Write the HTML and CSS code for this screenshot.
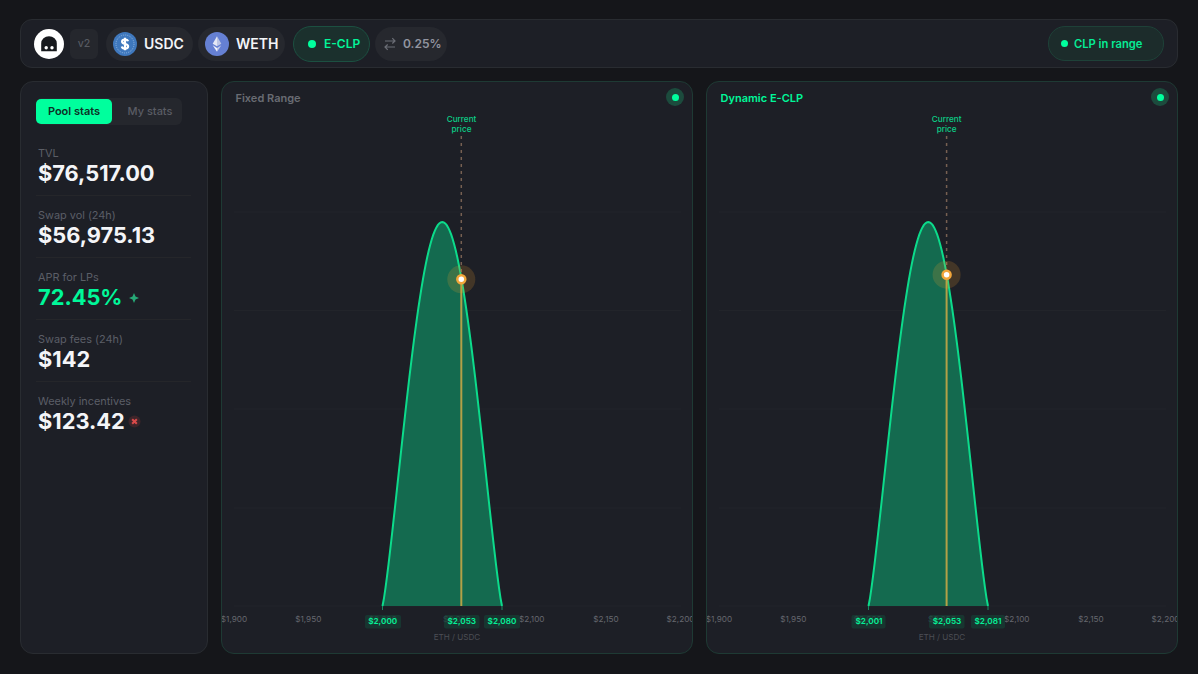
FILE: index.html
```html
<!DOCTYPE html>
<html lang="en">

<head>
    <meta charset="UTF-8">
    <meta name="viewport" content="width=device-width, initial-scale=1.0">
    <title>E-CLP Pool</title>
    <link rel="stylesheet" href="styles.css">
</head>

<body>

    <header class="topbar">
        <svg class="logo" viewBox="0 0 30 30">
            <circle cx="15" cy="15" r="15" fill="#fff" />
            <path d="M7.2 22.3V14.5a7.8 7.3 0 0 1 15.6 0v7.8z" fill="#17191d" />
            <circle cx="12.2" cy="18.7" r="1.7" fill="#fff" />
            <circle cx="18" cy="18.7" r="1.7" fill="#fff" />
        </svg>
        <span class="version">v2</span>

        <div class="pill token">
            <svg class="coin" viewBox="0 0 24 24">
                <circle cx="12" cy="12" r="12" fill="#3f78bd" />
                <circle cx="12" cy="12" r="9" fill="none" stroke="#8fb4de" stroke-width="1" stroke-dasharray="1 1" />
                <path d="M15 9.2c-.4-1.3-1.5-1.7-3-1.7-1.7 0-2.9.8-2.9 2.2 0 3 6 1.5 6 4.5 0 1.500-1.300 2.300-3.100 2.300-1.700 0-2.900-.7-3.200-2.100M12 5.700v12.600" fill="none" stroke="#fff" stroke-width="2.200" />
            </svg>
            <span>USDC</span>
        </div>
        <div class="pill token">
            <svg class="coin" viewBox="0 0 24 24">
                <circle cx="12" cy="12" r="12" fill="#6580d3" />
                <path d="M12 4.200 7.700 11.800 12 14.300z" fill="#e4e8f5" />
                <path d="M12 4.200 16.300 11.800 12 14.300z" fill="#bcc6e6" />
                <path d="M7.700 13.200 12 19.700v-3.800z" fill="#f2f4fb" />
                <path d="M16.300 13.200 12 19.700v-3.800z" fill="#c5cdea" />
            </svg>
            <span>WETH</span>
        </div>
        <div class="pill type"><span class="dot"></span>E-CLP</div>
        <div class="pill fee">
            <svg class="swap" viewBox="0 0 12 14">
                <path d="M1 4h10M8.300 1.200 11 4 8.300 6.500M11 10H1M3.700 7.500 1 10l2.700 2.800" fill="none" stroke="#6b6e76" stroke-width="1.200" />
            </svg>
            0.25%
        </div>
        <div class="pill status"><span class="dot"></span>CLP in range</div>
    </header>

    <main class="layout">
        <aside class="panel sidebar">
            <div class="tabs">
                <button class="tab active">Pool stats</button>
                <button class="tab">My stats</button>
            </div>

            <div class="stat">
                <div class="label">TVL</div>
                <div class="value">$76,517.00</div>
            </div>
            <div class="stat">
                <div class="label">Swap vol (24h)</div>
                <div class="value">$56,975.13</div>
            </div>
            <div class="stat">
                <div class="label">APR for LPs</div>
                <div class="value green">72.45%
                    <svg class="spark" viewBox="0 0 10 10">
                        <path d="M5 0 6.500 3.500 10 5 6.500 6.500 5 10 3.500 6.500 0 5 3.500 3.500z" fill="#27a876" />
                    </svg>
                </div>
            </div>
            <div class="stat">
                <div class="label">Swap fees (24h)</div>
                <div class="value">$142</div>
            </div>
            <div class="stat">
                <div class="label">Weekly incentives</div>
                <div class="value">$123.42
                    <svg class="reward" viewBox="0 0 14 14">
                        <circle cx="7" cy="7" r="6.500" fill="#3d252a" />
                        <path d="M4.500 4.500l5 5M9.500 4.500l-5 5" stroke="#d94a4a" stroke-width="2.200" />
                    </svg>
                </div>
            </div>
        </aside>

        <section class="panel chart">
            <div class="chart-head">
                <h2>Fixed Range</h2>
                <span class="halo"><span class="dot"></span></span>
            </div>
            <svg class="plot" viewBox="0 0 470 539">
                <path class="grid" d="M12 98H459M12 196.500H459M12 295H459M12 394H459M12 492H459" />
                <g class="ticks">
                    <text x="12" y="508.300">$1,900</text>
                    <text x="86.300" y="508.300">$1,950</text>
                    <text x="160.700" y="508.300">$2,000</text>
                    <text x="235" y="508.300">$2,050</text>
                    <text x="309.700" y="508.300">$2,100</text>
                    <text x="384" y="508.300">$2,150</text>
                    <text x="458.500" y="508.300">$2,200</text>
                </g>
                <text class="axis" x="235" y="526">ETH / USDC</text>
                <path class="curve" data-left="160.500" data-right="280" />
                <path class="edge" d="M160.500 492v4M280 492v4" />
                <text class="price" x="239.500" y="8">Current</text>
                <text class="price" x="239.500" y="17.500">price</text>
                <path class="dashed" d="M239.300 22V160" />
                <path class="stem" d="M239.300 165V492" />
                <circle class="glow" cx="239.300" cy="165.300" r="14" />
                <circle class="marker" cx="239.300" cy="165.300" r="4" />
                <g class="badges">
                    <rect x="143" y="501" width="36" height="13.500" rx="2" />
                    <rect x="222" y="501" width="35.500" height="13.500" rx="2" />
                    <rect x="262" y="501" width="36" height="13.500" rx="2" />
                    <text x="160.700" y="510.300">$2,000</text>
                    <text x="239.800" y="510.300">$2,053</text>
                    <text x="280" y="510.300">$2,080</text>
                </g>
            </svg>
        </section>

        <section class="panel chart">
            <div class="chart-head">
                <h2 class="green">Dynamic E-CLP</h2>
                <span class="halo"><span class="dot"></span></span>
            </div>
            <svg class="plot" viewBox="0 0 470 539">
                <path class="grid" d="M12 98H459M12 196.500H459M12 295H459M12 394H459M12 492H459" />
                <g class="ticks">
                    <text x="12" y="508.300">$1,900</text>
                    <text x="86.300" y="508.300">$1,950</text>
                    <text x="160.700" y="508.300">$2,000</text>
                    <text x="235" y="508.300">$2,050</text>
                    <text x="309.700" y="508.300">$2,100</text>
                    <text x="384" y="508.300">$2,150</text>
                    <text x="458.500" y="508.300">$2,200</text>
                </g>
                <text class="axis" x="235" y="526">ETH / USDC</text>
                <path class="curve" data-left="161.500" data-right="281" />
                <path class="edge" d="M161.500 492v4M281 492v4" />
                <text class="price" x="239.700" y="8">Current</text>
                <text class="price" x="239.700" y="17.500">price</text>
                <path class="dashed" d="M239.600 22V156" />
                <path class="stem" d="M239.600 161V492" />
                <circle class="glow" cx="239.600" cy="160.700" r="14" />
                <circle class="marker" cx="239.600" cy="160.700" r="4" />
                <g class="badges">
                    <rect x="144.500" y="501" width="34" height="13.500" rx="2" />
                    <rect x="222" y="501" width="35.500" height="13.500" rx="2" />
                    <rect x="264" y="501" width="34" height="13.500" rx="2" />
                    <text x="162" y="510.300">$2,001</text>
                    <text x="240" y="510.300">$2,053</text>
                    <text x="281" y="510.300">$2,081</text>
                </g>
            </svg>
        </section>
    </main>

    <script>
        // liquidity curve between the two price bounds
        document.querySelectorAll(".curve").forEach(function (path) {
            const left = parseFloat(path.dataset.left);
            const right = parseFloat(path.dataset.right);
            const base = 492, height = 384, steps = 80;
            let d = "";
            for (let i = 0; i <= steps; i++) {
                const t = i / steps;
                const x = left + (right - left) * t;
                const y = base - height * Math.pow(Math.max(0, Math.sin(Math.PI * t)), 1.2);
                d += (i ? "L" : "M") + x.toFixed(2) + " " + y.toFixed(2);
            }
            path.setAttribute("d", d);
        });
    </script>

</body>

</html>
```
FILE: styles.css
```css
* {
    margin: 0;
    padding: 0;
    box-sizing: border-box;
    font-family: 'Inter', sans-serif;
}

body {
    background-color: #15161a;
    color: #f4f5f8;
    height: 674px;
    padding: 19px 20px 20px;
    display: flex;
    flex-direction: column;
    gap: 13px;
    overflow: hidden;
}

.topbar {
    height: 49px;
    display: flex;
    align-items: center;
    padding: 0 13px;
    background: #1d1f26;
    border: 1px solid #292c31;
    border-radius: 12px;
}

.logo {
    width: 30px;
    height: 30px;
}

.version {
    width: 28px;
    height: 30px;
    margin: 0 8px 0 6px;
    border-radius: 6px;
    background: #25272d;
    color: #575a61;
    font-size: 10.5px;
    font-weight: 500;
    line-height: 29px;
    text-align: center;
}

.pill {
    height: 34px;
    display: flex;
    align-items: center;
    border-radius: 17px;
    background: #26282e;
    font-weight: 600;
}

.token {
    width: 87px;
    padding-left: 7px;
    margin-right: 5px;
    gap: 7px;
    font-size: 14px;
}

.coin {
    width: 24px;
    height: 24px;
    flex-shrink: 0;
}

.dot {
    width: 8px;
    height: 8px;
    flex-shrink: 0;
    border-radius: 50%;
    background: #00ff9d;
}

.type {
    width: 77px;
    height: 36px;
    margin-left: 3px;
    padding-left: 14px;
    gap: 8px;
    border: 1px solid #1c5041;
    border-radius: 18px;
    background: #1b302d;
    color: #02f598;
    font-size: 12px;
}

.fee {
    width: 72px;
    margin-left: 5px;
    padding-left: 9px;
    gap: 7px;
    color: #9295a0;
    font-size: 12px;
}

.swap {
    width: 12px;
    height: 14px;
}

.status {
    width: 116px;
    height: 35px;
    margin-left: auto;
    padding-left: 12px;
    gap: 6px;
    border: 1px solid #1e4138;
    background: #1c2c2b;
    color: #06ed96;
    font-size: 11.2px;
}

.status .dot,
.halo .dot {
    width: 7px;
    height: 7px;
}

.layout {
    height: 573px;
    display: grid;
    grid-template-columns: 188px 472px 472px;
    gap: 13px;
}

.panel {
    background: #1d1f26;
    border: 1px solid #292c31;
    border-radius: 13px;
    overflow: hidden;
}

.sidebar {
    padding: 16px 16px 0 15px;
}

.tabs {
    width: 146px;
    height: 27px;
    display: flex;
    align-items: center;
    margin-bottom: 9px;
    border-radius: 6px;
    background: #25272d;
}

.tab {
    width: 70px;
    height: 25px;
    flex-shrink: 0;
    padding-bottom: 1px;
    border: none;
    border-radius: 5px;
    background: none;
    color: #5a5c64;
    font-size: 11px;
    font-weight: 500;
}

.tab.active {
    width: 76px;
    margin-right: 3px;
    background: #00ff9d;
    color: #0d3026;
    font-weight: 600;
}

.stat {
    height: 62px;
    padding: 13px 2px 0;
    border-bottom: 1px solid #25262a;
}

.stat:last-child {
    border-bottom: none;
}

.label {
    color: #5b5e66;
    font-size: 10.9px;
    line-height: 13px;
}

.value {
    display: flex;
    align-items: center;
    font-size: 21.8px;
    font-weight: 700;
    line-height: 27px;
}

.green,
.chart-head .green {
    color: #00f799;
}

.spark {
    width: 10px;
    height: 10px;
    margin-left: 6px;
}

.reward {
    width: 13px;
    height: 13px;
    margin-left: 3px;
}

.chart {
    border-color: #1e3a34;
}

.chart-head {
    height: 32px;
    display: flex;
    justify-content: space-between;
    align-items: center;
    padding: 0 8px 2px 13.5px;
}

.chart-head h2 {
    padding-top: 1px;
    color: #696c73;
    font-size: 11px;
    font-weight: 600;
}

.halo {
    width: 18px;
    height: 18px;
    display: flex;
    align-items: center;
    justify-content: center;
    border-radius: 50%;
    background: #1c4b3d;
}

.plot {
    display: block;
    width: 470px;
    height: 539px;
}

.plot text {
    text-anchor: middle;
}

.grid {
    stroke: #22242a;
    stroke-width: 1;
}

.ticks text {
    fill: #66686f;
    font-size: 8.2px;
}

.axis {
    fill: #4c4e55;
    font-size: 8.1px;
}

.price {
    fill: #0bcf87;
    font-size: 8.2px;
    font-weight: 500;
}

.curve {
    fill: #146a4f;
    stroke: #0cdb8b;
    stroke-width: 2;
}

.edge {
    stroke: #168b63;
    stroke-width: 1;
}

.dashed {
    stroke: #776052;
    stroke-width: 1.5;
    stroke-dasharray: 3 4;
}

.stem {
    stroke: #b3a047;
    stroke-width: 2;
}

.glow {
    fill: #f59e2b;
    fill-opacity: 0.18;
}

.marker {
    fill: #fff;
    stroke: #f2a63a;
    stroke-width: 2.5;
}

.badges rect {
    fill: #173e34;
    fill-opacity: 0.75;
}

.badges text {
    fill: #05f097;
    font-size: 8.2px;
    font-weight: 600;
}
```
